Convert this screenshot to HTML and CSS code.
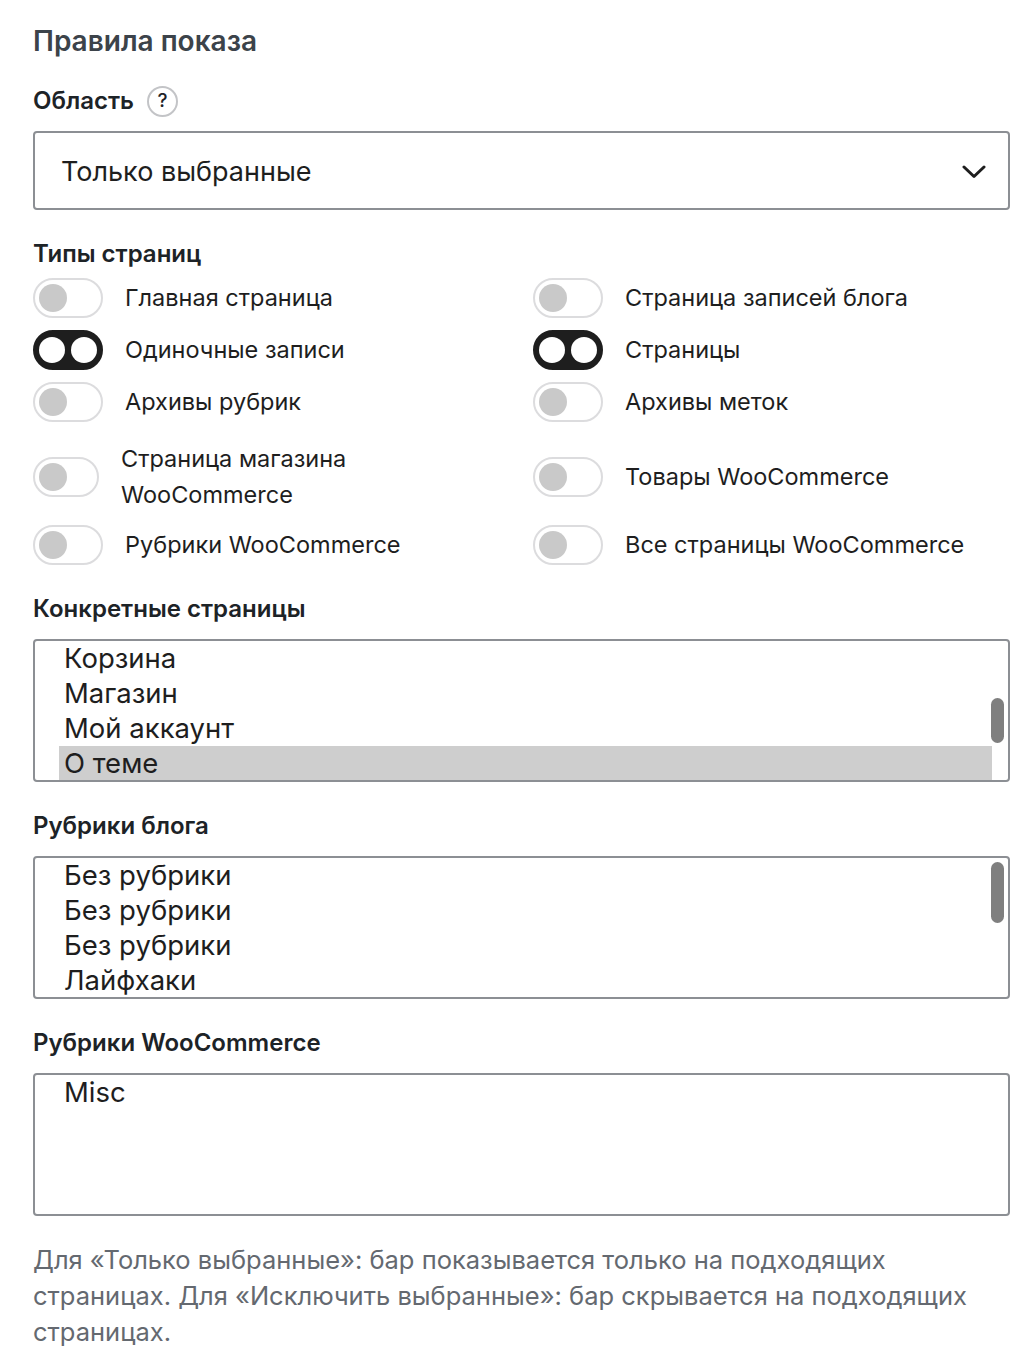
FILE: index.html
```html
<!DOCTYPE html>
<html lang="ru">
<head>
    <meta charset="UTF-8">
    <meta name="viewport" content="width=device-width, initial-scale=1.0">
    <title>Правила показа</title>
    <link rel="stylesheet" href="styles.css">
</head>
<body>
    <div id="rules-panel">
        <h2 class="panel-title">Правила показа</h2>

        <div class="field-label with-help">
            <span>Область</span>
            <span class="help-icon">?</span>
        </div>
        <div class="select-box">
            <span>Только выбранные</span>
            <svg class="chevron" width="24" height="14" viewBox="0 0 24 14">
                <polyline points="2,2 12,11.5 22,2" fill="none" stroke="#1e1e1e" stroke-width="3" stroke-linecap="round" stroke-linejoin="round"/>
            </svg>
        </div>

        <div class="field-label section">Типы страниц</div>
        <div class="toggle-grid">
            <div class="toggle-row"><span class="toggle"></span><span class="toggle-text">Главная страница</span></div>
            <div class="toggle-row"><span class="toggle"></span><span class="toggle-text">Страница записей блога</span></div>

            <div class="toggle-row"><span class="toggle on"></span><span class="toggle-text">Одиночные записи</span></div>
            <div class="toggle-row"><span class="toggle on"></span><span class="toggle-text">Страницы</span></div>

            <div class="toggle-row"><span class="toggle"></span><span class="toggle-text">Архивы рубрик</span></div>
            <div class="toggle-row"><span class="toggle"></span><span class="toggle-text">Архивы меток</span></div>

            <div class="toggle-row tall"><span class="toggle narrow"></span><span class="toggle-text wrapped">Страница магазина<br>WooCommerce</span></div>
            <div class="toggle-row tall"><span class="toggle"></span><span class="toggle-text">Товары WooCommerce</span></div>

            <div class="toggle-row"><span class="toggle"></span><span class="toggle-text">Рубрики WooCommerce</span></div>
            <div class="toggle-row"><span class="toggle"></span><span class="toggle-text">Все страницы WooCommerce</span></div>
        </div>

        <div class="field-label section">Конкретные страницы</div>
        <div class="list-box">
            <ul>
                <li>Корзина</li>
                <li>Магазин</li>
                <li>Мой аккаунт</li>
                <li class="selected">О теме</li>
            </ul>
            <span class="scroll-thumb" style="top: 57px; height: 45px;"></span>
        </div>

        <div class="field-label section">Рубрики блога</div>
        <div class="list-box">
            <ul>
                <li>Без рубрики</li>
                <li>Без рубрики</li>
                <li>Без рубрики</li>
                <li>Лайфхаки</li>
            </ul>
            <span class="scroll-thumb" style="top: 4px; height: 61px;"></span>
        </div>

        <div class="field-label section">Рубрики WooCommerce</div>
        <div class="list-box">
            <ul>
                <li>Misc</li>
            </ul>
        </div>

        <p class="hint">Для «Только выбранные»: бар показывается только на подходящих страницах. Для «Исключить выбранные»: бар скрывается на подходящих страницах.</p>
    </div>
</body>
</html>
```

FILE: styles.css
```css
body {
    margin: 0;
    padding: 0;
    background-color: #fff;
    font-family: Inter, "Noto Sans", sans-serif;
    color: #1e1e1e;
}

#rules-panel {
    padding: 23px 18px 0 33px;
}

.panel-title {
    margin: 0;
    font-size: 28px;
    line-height: 36px;
    font-weight: 600;
    color: #3c434a;
}

.field-label {
    font-size: 24px;
    line-height: 30px;
    font-weight: 600;
    color: #1d2327;
}

.with-help {
    display: flex;
    align-items: center;
    gap: 13px;
    margin-top: 24px;
    height: 36px;
}

.help-icon {
    width: 27px;
    height: 27px;
    border: 2px solid #c3c4c7;
    border-radius: 50%;
    display: flex;
    align-items: center;
    justify-content: center;
    font-size: 19px;
    font-weight: 500;
    color: #1d2327;
}

.select-box {
    margin-top: 12px;
    height: 79px;
    box-sizing: border-box;
    border: 2px solid #8c8f94;
    border-radius: 4px;
    display: flex;
    align-items: center;
    justify-content: space-between;
    padding: 2px 22px 0 26px;
    font-size: 27px;
    color: #1e1e1e;
}

.section {
    margin-top: 29px;
}

.toggle-grid {
    margin-top: 9px;
    display: grid;
    grid-template-columns: 500px 1fr;
    row-gap: 12px;
}

.toggle-row {
    display: flex;
    align-items: center;
    gap: 22px;
    min-height: 40px;
}

.toggle-row.tall {
    margin-top: 7px;
}

.toggle-text {
    font-size: 23.5px;
    line-height: 36px;
    color: #1e1e1e;
}

.toggle {
    position: relative;
    width: 70px;
    height: 40px;
    box-sizing: border-box;
    border: 2px solid #dcdcde;
    border-radius: 20px;
    background-color: #fff;
    flex-shrink: 0;
}

.toggle.narrow {
    width: 66px;
}

.toggle::before {
    content: "";
    position: absolute;
    left: 4px;
    top: 4px;
    width: 28px;
    height: 28px;
    border-radius: 50%;
    background-color: #c9c9c9;
}

.toggle.on {
    border-color: #1e1e1e;
    background-color: #1e1e1e;
}

.toggle.on::before,
.toggle.on::after {
    content: "";
    position: absolute;
    top: 5px;
    width: 26px;
    height: 26px;
    border-radius: 50%;
    background-color: #fff;
}

.toggle.on::before {
    left: 4px;
}

.toggle.on::after {
    right: 4px;
}

.list-box {
    position: relative;
    margin-top: 15px;
    height: 143px;
    box-sizing: border-box;
    border: 2px solid #8c8f94;
    border-radius: 4px;
    overflow: hidden;
}

.list-box ul {
    list-style: none;
    margin: 0;
    padding: 0 16px 0 24px;
}

.list-box li {
    height: 35px;
    line-height: 35px;
    padding-left: 5px;
    font-size: 27.5px;
    color: #1e1e1e;
}

.list-box li.selected {
    background-color: #cecece;
}

.scroll-thumb {
    position: absolute;
    right: 4px;
    width: 13px;
    border-radius: 7px;
    background-color: #7f7f7f;
}

.hint {
    margin: 26px 0 0;
    font-size: 25.5px;
    line-height: 36px;
    color: #646970;
}
```
